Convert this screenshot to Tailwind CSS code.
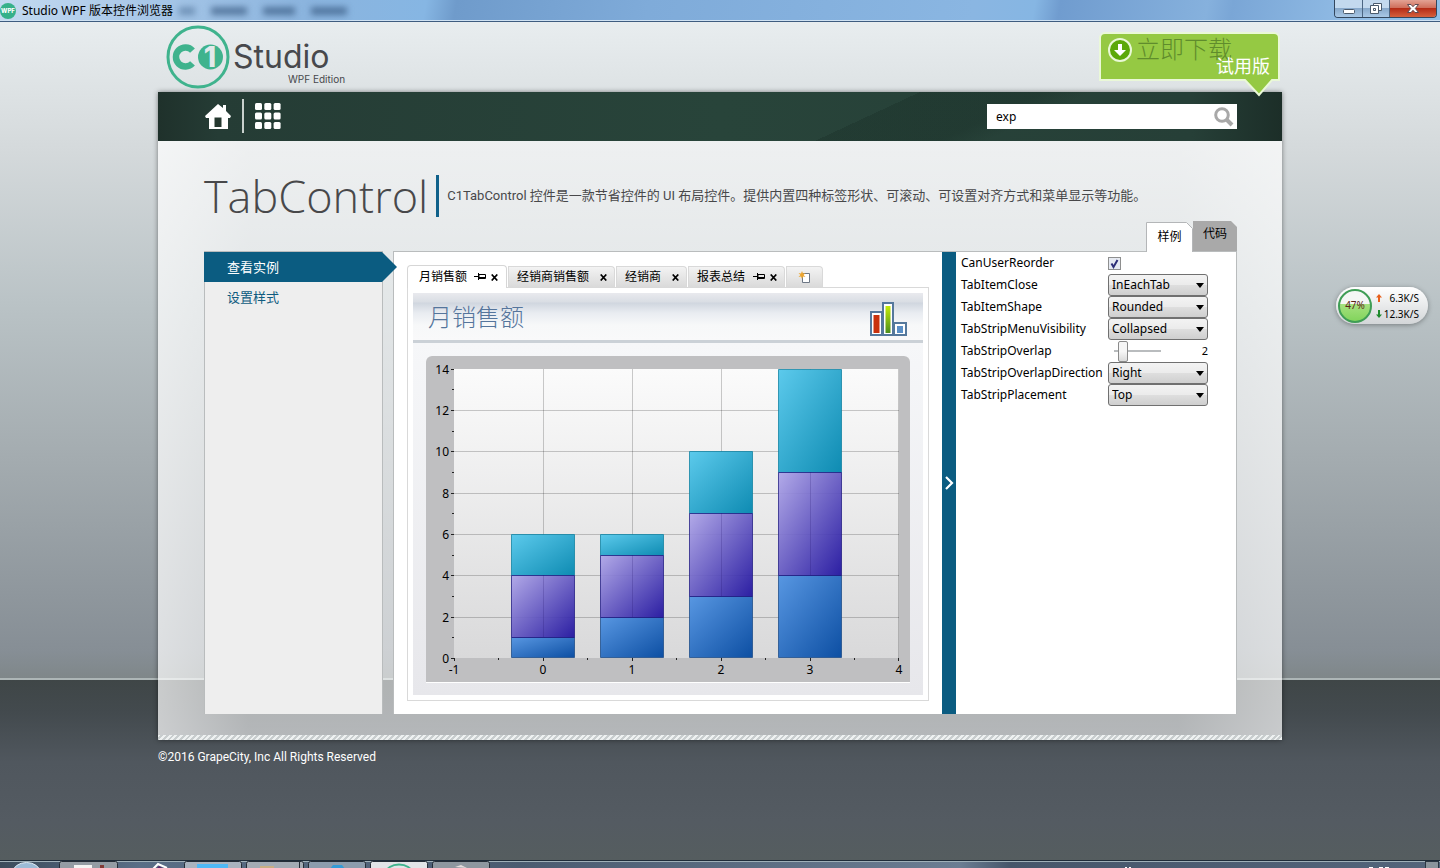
<!DOCTYPE html>
<html lang="zh-CN">
<head>
<meta charset="utf-8">
<meta name="viewport" content="width=device-width, initial-scale=1">
<title>Studio WPF 版本控件浏览器</title>
<script src="https://cdn.jsdelivr.net/npm/@tailwindcss/browser@4"></script>
</head>
<body class="flex min-h-screen flex-col bg-[#545b62] font-['Noto_Sans','Noto_Sans_CJK_SC',sans-serif] text-xs text-black">

<!-- Window title bar -->
<header class="relative flex h-[22px] shrink-0 items-center justify-between overflow-hidden border-b border-[#3f5d80] bg-[linear-gradient(100deg,#c3daf0_0,#a9c8e8_140px,#8bb4de_300px,#86b6e3_420px,#6f9bcb_450px,#7fabd9_640px,#8ab6e2_960px,#86b6e3_1020px,#709ccf_1045px,#86b1dd_1190px,#7aa6d6_1215px,#92bde6_1340px,#8fc0e8_100%)] shadow-[inset_0_-1px_0_#cfe2f3]">
  <div class="flex items-center gap-[6px]">
    <svg class="size-4" viewBox="0 0 16 16" aria-hidden="true"><circle cx="8" cy="8" r="8" fill="#35b18a"/><text x="8" y="10" font-size="6" font-weight="800" font-family="Inter" text-anchor="middle" fill="#fff">WPF</text></svg>
    <h1 class="text-xs leading-5">Studio WPF 版本控件浏览器</h1>
    <span class="flex items-center gap-4 blur-[3px]" aria-hidden="true">
      <i class="h-2 w-4 bg-[#3f638c]/50"></i><i class="h-2 w-9 bg-[#2c4d75]/60"></i><i class="h-2 w-8 bg-[#2c4d75]/60"></i><i class="h-2 w-9 bg-[#2c4d75]/60"></i>
    </span>
  </div>
  <div class="mr-[3px] flex h-[18px] self-start overflow-hidden rounded-b-[4px] border border-t-0 border-[#33475e]">
    <button aria-label="最小化" class="grid w-7 place-items-center border-r border-[#4c6683] bg-[linear-gradient(#c3d9ee_0_45%,#88a9cb_50%,#a9c8e6)]">
      <svg class="h-4 w-4" viewBox="0 0 16 16"><rect x="2.500" y="8.500" width="11" height="4" rx="1" fill="#fff" stroke="#4a5a6c"/></svg>
    </button>
    <button aria-label="还原" class="grid w-[27px] place-items-center border-r border-[#4c6683] bg-[linear-gradient(#c3d9ee_0_45%,#88a9cb_50%,#a9c8e6)]">
      <svg class="h-4 w-4" viewBox="0 0 16 16" fill="#fff" stroke="#4a5a6c"><path d="M5.500 2.500h8v7h-8z"/><path d="M2.500 4.500h8v8h-8zM5.500 7.500h2v2h-2z" fill-rule="evenodd"/></svg>
    </button>
    <button aria-label="关闭" class="grid w-[46px] place-items-center bg-[linear-gradient(#e3a294_0,#cf6f5c_45%,#b52c17_50%,#d5603c)]">
      <svg class="h-4 w-4" viewBox="0 0 16 16"><path d="M2.500 3.500h3.500l2 2.200 2-2.200h3.500L10.300 7.500l3.200 4H10L8 9.300l-2 2.200H2.500l3.200-4z" fill="#fff" stroke="#5d4a52"/></svg>
    </button>
  </div>
</header>

<main class="relative flex-1 bg-[linear-gradient(#e8edef_0,#d4d9db_130px,#bac3c6_280px,#a3abaf_440px,#868e95_630px,#7f8789_656px,#adb6b6_656px,#adb6b6_658px,#3f4647_658px,#434a4e_690px,#50575e_740px,#545b62_800px,#555d5f_838px)]">
  <div class="mx-auto w-full max-w-[1124px]">

    <!-- Brand row -->
    <div class="relative flex h-[70px] items-start justify-between pl-2">
      <a href="#" aria-label="C1 Studio WPF Edition" class="flex items-start gap-[3px] pt-[3px] font-['Inter',sans-serif] text-[#47484c]">
        <svg class="size-16" viewBox="0 0 64 64" aria-hidden="true">
          <circle cx="32" cy="32" r="30" fill="none" stroke="#3fb38d" stroke-width="3"/>
          <path d="M26.500 25.600a9.500 9.500 0 1 0 0 12.800" fill="none" stroke="#3fb38d" stroke-width="6.500"/>
          <circle cx="44.500" cy="32" r="12.500" fill="#3fb38d"/>
          <text x="44" y="42" text-anchor="middle" font-family="Inter" font-weight="800" font-size="28" fill="#e3e9ea">1</text>
        </svg>
        <span class="flex flex-col pt-4">
          <span class="text-[32px] leading-8">Studio</span>
          <span class="pl-[55px] text-[10px] leading-3">WPF Edition</span>
        </span>
      </a>
      <a href="#" class="relative z-10 mt-[10px] mr-[2px] block h-[66px] w-[181px]">
        <svg class="absolute inset-0" width="181" height="66" viewBox="0 0 181 66" aria-hidden="true">
          <path d="M6 1h169a5 5 0 0 1 5 5v42h-7L160 63 146 48H1V6a5 5 0 0 1 5-5z" fill="#95c943" stroke="#eaf8d8" stroke-width="2"/>
          <circle cx="21" cy="18" r="11" fill="#5ba808" stroke="#e9f8d6" stroke-width="2"/>
          <path d="M19 12h4v6h4l-6 6-6-6h4z" fill="#fff"/>
        </svg>
        <span class="absolute top-[3px] left-[37px] text-2xl leading-7 font-light text-[#5f8c2c]">立即下载</span>
        <span class="absolute top-[22px] right-[10px] text-lg leading-6 text-white">试用版</span>
      </a>
    </div>

    <div class="shadow-[0_0_5px_rgba(0,0,0,0.45)]">
      <!-- Navigation -->
      <nav class="flex h-[49px] items-center justify-between bg-[linear-gradient(155deg,transparent_0_62%,rgba(10,25,20,0.18)_62%_72%,transparent_76%),linear-gradient(90deg,#1f312b_0,#253c35_60px,#28443a_50%,#263f37_92%,#1c2e28)] pr-[45px] pl-[47px]">
        <div class="flex items-center gap-[11px] pb-px">
          <a href="#" aria-label="主页"><svg class="h-[26px] w-[26px]" viewBox="0 0 26 26" fill="#fff"><path d="M13 1l5 4V2h3v6l5 5-1 2h-2v11H4V15H1l-1-2z"/><path d="M9.500 14.500h7V24h-7z" fill="#25382f"/></svg></a>
          <span class="h-[34px] w-[2px] bg-[#c9d1ce]"></span>
          <a href="#" aria-label="全部控件"><svg class="h-[26px] w-[26px]" viewBox="0 0 26 26" fill="#fff"><g id="r"><rect width="7" height="7" rx="1.500"/><rect x="9.300" width="7" height="7" rx="1.500"/><rect x="18.600" width="7" height="7" rx="1.500"/></g><use href="#r" y="9.500"/><use href="#r" y="19"/></svg></a>
        </div>
        <form class="flex h-[25px] w-[250px] items-center bg-white pr-[3px]">
          <input type="text" aria-label="搜索" value="exp" class="min-w-0 flex-1 pl-[9px] text-xs outline-none">
          <button type="button" aria-label="搜索"><svg class="size-5" viewBox="0 0 20 20" fill="none" stroke="#a8a8a8"><circle cx="8" cy="8" r="6.300" stroke-width="3"/><path d="M12.500 12.500l5.500 5.500" stroke-width="4"/></svg></button>
        </form>
      </nav>

      <!-- Page panel -->
      <section class="bg-[linear-gradient(90deg,rgba(255,255,255,0.72)_0,rgba(255,255,255,0.59)_90px,rgba(255,255,255,0.59)_1020px,rgba(255,255,255,0.7)_100%)]">
        <div class="pr-[45px] pb-[21px] pl-[46px]">
          <div class="flex h-20 items-center pt-[30px]">
            <h2 class="border-r-3 border-[#10618a] pr-2 font-['Open_Sans',sans-serif] text-[45px] leading-[42px] font-light text-[#48484a]">TabControl</h2>
            <p class="pl-2 font-['Roboto','Noto_Sans_CJK_SC',sans-serif] text-[13px] leading-5 text-[#48484a]">C1TabControl 控件是一款节省控件的 UI 布局控件。提供内置四种标签形状、可滚动、可设置对齐方式和菜单显示等功能。</p>
          </div>
          <div class="relative -mb-px flex h-[31px] items-start justify-end" role="tablist">
            <button role="tab" aria-selected="true" class="relative z-10 mt-px h-[30px] w-[47px]"><svg class="absolute inset-0" width="47" height="30" viewBox="0 0 47 30"><path d="M.5 30V.5h40l6 6V30" fill="#fff" stroke="#b4b6b8"/></svg><span class="relative">样例</span></button>
            <button role="tab" aria-selected="false" class="relative h-[30px] w-[44px] pb-1"><svg class="absolute inset-0" width="44" height="30" viewBox="0 0 44 30"><path d="M0 0h38l6 6v24H0z" fill="#a9a9a9"/></svg><span class="relative">代码</span></button>
          </div>

          <div class="flex h-[463px] gap-[10px]">
            <!-- Sidebar -->
            <aside class="w-[179px] shrink-0 border border-b-0 border-[#b9bcbd] bg-[#eee]">
              <ul class="-ml-px text-[13px] leading-[30px]">
                <li><a href="#" class="relative block bg-[#0b5c81] pl-[23px] text-white">查看实例<svg class="absolute top-0 left-full" width="15" height="30" viewBox="0 0 15 30"><path d="M0 0l15 15L0 30z" fill="#0b5c81"/></svg></a></li>
                <li><a href="#" class="block pl-[23px] text-[#0f5b80]">设置样式</a></li>
              </ul>
            </aside>

            <div class="flex min-w-0 flex-1 border border-b-0 border-[#b9bcbd] bg-white">
              <!-- Demo tab control -->
              <div class="flex min-w-0 flex-1 flex-col p-[13px]">
                <div class="relative -mb-px flex items-end gap-px" role="tablist">
                  <div role="tab" aria-selected="true" class="z-10 flex h-[23px] items-center rounded-t-[4px] border border-b-0 border-[#d6d6d6] bg-white pr-2 pl-[11px]">
                    <span>月销售额</span>
                    <button aria-label="固定" class="ml-[7px]"><svg class="h-3 w-3" viewBox="0 0 12 12"><path d="M0 5.500h4M4.500 2v7M5 3.500h6.500v4H5z" fill="none" stroke="#000"/><path d="M5 6h6v2H5z"/></svg></button>
                    <button aria-label="关闭" class="ml-[5px]"><svg class="h-[7px] w-[7px]" viewBox="0 0 7 7"><path d="M.7.5l5.600 6M6.300.5l-5.600 6" stroke="#000" stroke-width="1.700"/></svg></button>
                  </div>
                  <div role="tab" class="mb-px flex h-[21px] items-center rounded-tr-[4px] border border-b-0 border-[#d9d9d9] bg-linear-to-b from-[#f3f3f3] to-[#dadada] pr-[7px] pl-2">
                    <span>经销商销售额</span>
                    <button aria-label="关闭" class="ml-[11px]"><svg class="h-[7px] w-[7px]" viewBox="0 0 7 7"><path d="M.7.5l5.600 6M6.300.5l-5.600 6" stroke="#000" stroke-width="1.700"/></svg></button>
                  </div>
                  <div role="tab" class="mb-px flex h-[21px] items-center rounded-tr-[4px] border border-b-0 border-[#d9d9d9] bg-linear-to-b from-[#f3f3f3] to-[#dadada] pr-[7px] pl-2">
                    <span>经销商</span>
                    <button aria-label="关闭" class="ml-[11px]"><svg class="h-[7px] w-[7px]" viewBox="0 0 7 7"><path d="M.7.5l5.600 6M6.300.5l-5.600 6" stroke="#000" stroke-width="1.700"/></svg></button>
                  </div>
                  <div role="tab" class="mb-px flex h-[21px] items-center rounded-tr-[4px] border border-b-0 border-[#d9d9d9] bg-linear-to-b from-[#f3f3f3] to-[#dadada] pr-[7px] pl-2">
                    <span>报表总结</span>
                    <button aria-label="固定" class="ml-2"><svg class="h-3 w-3" viewBox="0 0 12 12"><path d="M0 5.500h4M4.500 2v7M5 3.500h6.500v4H5z" fill="none" stroke="#000"/><path d="M5 6h6v2H5z"/></svg></button>
                    <button aria-label="关闭" class="ml-[5px]"><svg class="h-[7px] w-[7px]" viewBox="0 0 7 7"><path d="M.7.5l5.600 6M6.300.5l-5.600 6" stroke="#000" stroke-width="1.700"/></svg></button>
                  </div>
                  <button aria-label="新建标签" class="mb-px grid h-[21px] w-[37px] place-items-center rounded-tr-[4px] border border-b-0 border-[#d9d9d9] bg-linear-to-b from-[#f3f3f3] to-[#dadada]"><svg class="h-[13px] w-[13px]" viewBox="0 0 13 13"><path d="M4.500 2.500h7v9h-7z" fill="#fff" stroke="#6d7785"/><path d="M4 0l1 2.500L7.500 2 5.600 4 7.500 6 5 5.500 4 8 3 5.500.500 6l1.900-2L.500 2 3 2.500z" fill="#eca52f"/></svg></button>
                </div>
                <div class="flex flex-1 flex-col border border-[#d9d9d9] p-[5px]">
                  <div class="flex h-[50px] shrink-0 items-center justify-between border-b-3 border-[#cbd1d7] bg-[linear-gradient(#e9eaee_0,#d9dde4_9px,#d0d6df_10px,#e9ecf1_20px,#f7f8f9_32px,#f9f9fa)] pr-[15px] pl-[15px]">
                    <h3 class="text-2xl leading-8 font-light text-[#55759c]">月销售额</h3>
                    <svg class="mt-1 h-[36px] w-[39px]" viewBox="0 0 39 36" fill="#fff" stroke="#55789c" stroke-width="2"><path d="M2 11h11v23H2z"/><path d="M25 22h12v12H25z"/><path d="M14 2h10v32H14z"/><g stroke="none"><path d="M4.500 14h6v18h-6z" fill="#c8310d"/><path d="M16.500 5h5v27h-5z" fill="url(#green)"/><path d="M28 25h6v7h-6z" fill="#5b8fc6"/></g></svg>
                  </div>
                  <div class="flex-1 bg-linear-to-b from-[#f6f7f9] to-[#e7e7eb] px-[13px] pt-[13px]">
                    <svg class="block w-full" viewBox="0 0 484 327" role="img" aria-label="月销售额堆积柱形图" font-family="Noto Sans" font-size="12">
                      <defs>
                        <linearGradient id="green" x2="0" y2="1"><stop stop-color="#c6ec08"/><stop offset="1" stop-color="#4c8e1c"/></linearGradient>
                        <linearGradient id="plot" x2="0" y2="1"><stop stop-color="#fbfbfb"/><stop offset="1" stop-color="#d9d9da"/></linearGradient>
                        <linearGradient id="teal" x2="1" y2="1"><stop stop-color="#5ccaec"/><stop offset="1" stop-color="#0e8bb2"/></linearGradient>
                        <linearGradient id="violet" x2="1" y2="1"><stop stop-color="#aea5e8"/><stop offset="1" stop-color="#1e109e"/></linearGradient>
                        <linearGradient id="blue" x2="1" y2="1"><stop stop-color="#5897e2"/><stop offset="1" stop-color="#0d4fa3"/></linearGradient>
                      </defs>
                      <path d="M0 326V6a6 6 0 0 1 6-6h472a6 6 0 0 1 6 6v321H0z" fill="#fff"/>
                      <path d="M0 326V6a6 6 0 0 1 6-6h472a6 6 0 0 1 6 6v320z" fill="#bfbfc1"/>
                      <path d="M28 13h445v289H28z" fill="url(#plot)"/>
                      <path d="M117.500 13v289M206.500 13v289M295.500 13v289M384.500 13v289M472.500 13v289M28 54.500h445M28 95.500h445M28 137.500h445M28 178.500h445M28 219.500h445M28 261.500h445" stroke="#000" stroke-opacity=".2"/>
                      <g stroke-opacity=".75">
                        <g fill="url(#teal)" stroke="#0b7f9f"><path d="M85.500 178.500h63v41h-63z"/><path d="M174.500 178.500h63v21h-63z"/><path d="M263.500 95.500h63v62h-63z"/><path d="M352.500 13.500h63v103h-63z"/></g>
                        <g fill="url(#blue)" stroke="#1a4a86"><path d="M85.500 281.500h63v20h-63z"/><path d="M174.500 261.500h63v40h-63z"/><path d="M263.500 240.500h63v61h-63z"/><path d="M352.500 219.500h63v82h-63z"/></g>
                        <g fill="url(#violet)" fill-opacity=".93" stroke="#1d1880"><path d="M85.500 219.500h63v62h-63z"/><path d="M174.500 199.500h63v62h-63z"/><path d="M263.500 157.500h63v83h-63z"/><path d="M352.500 116.500h63v103h-63z"/></g>
                      </g>
                      <path d="M117.500 219v62M206.500 199v62M295.500 157v83M384.500 116v103" stroke="#20106a" stroke-opacity=".18"/>
                      <path d="M25 13.500h3M25 54.500h3M25 95.500h3M25 137.500h3M25 178.500h3M25 219.500h3M25 261.500h3M25 302.500h3M26 33.500h2M26 75.500h2M26 116.500h2M26 157.500h2M26 199.500h2M26 240.500h2M26 281.500h2M28.500 302v3M117.500 302v3M206.500 302v3M295.500 302v3M384.500 302v3M472.500 302v3M72.500 302v2M161.500 302v2M250.500 302v2M339.500 302v2M428.500 302v2" stroke="#222"/>
                      <g text-anchor="end"><text x="23" y="18">14</text><text x="23" y="59">12</text><text x="23" y="100">10</text><text x="23" y="142">8</text><text x="23" y="183">6</text><text x="23" y="224">4</text><text x="23" y="266">2</text><text x="23" y="307">0</text></g>
                      <g text-anchor="middle"><text x="28" y="318">-1</text><text x="117" y="318">0</text><text x="206" y="318">1</text><text x="295" y="318">2</text><text x="384" y="318">3</text><text x="473" y="318">4</text></g>
                    </svg>
                  </div>
                </div>
              </div>

              <!-- Collapsible property panel -->
              <button aria-label="折叠属性面板" class="grid w-[14px] shrink-0 place-items-center bg-[#0b5c81]"><svg width="10" height="14" viewBox="0 0 10 14"><path d="M2 1l6 6-6 6" fill="none" stroke="#fff" stroke-width="2.200"/></svg></button>
              <form class="grid w-[280px] shrink-0 auto-rows-[22px] grid-cols-[147px_100px] content-start items-center pl-[5px] text-xs">
                <label for="reorder">CanUserReorder</label>
                <span class="relative size-[13px]"><input id="reorder" type="checkbox" checked class="peer block size-[13px] appearance-none border border-[#8e8f8f] bg-[#e6eaf2]"><svg class="pointer-events-none absolute inset-0 hidden peer-checked:block" width="13" height="13" viewBox="0 0 13 13"><path d="M3.500 6.500l2 3.500 4-7" fill="none" stroke="#2d2f78" stroke-width="2"/></svg></span>
                <label for="close">TabItemClose</label>
                <span class="relative"><select id="close" class="block h-[22px] w-full appearance-none rounded-[3px] border border-[#707070] bg-[linear-gradient(#f3f3f3_0,#ebebeb_50%,#dedede_51%,#cfcfcf)] pl-[3px] text-xs"><option>InEachTab</option></select><svg class="pointer-events-none absolute top-[9px] right-1" width="8" height="5"><path d="M0 0h8L4 5z"/></svg></span>
                <label for="shape">TabItemShape</label>
                <span class="relative"><select id="shape" class="block h-[22px] w-full appearance-none rounded-[3px] border border-[#707070] bg-[linear-gradient(#f3f3f3_0,#ebebeb_50%,#dedede_51%,#cfcfcf)] pl-[3px] text-xs"><option>Rounded</option></select><svg class="pointer-events-none absolute top-[9px] right-1" width="8" height="5"><path d="M0 0h8L4 5z"/></svg></span>
                <label for="menu">TabStripMenuVisibility</label>
                <span class="relative"><select id="menu" class="block h-[22px] w-full appearance-none rounded-[3px] border border-[#707070] bg-[linear-gradient(#f3f3f3_0,#ebebeb_50%,#dedede_51%,#cfcfcf)] pl-[3px] text-xs"><option>Collapsed</option></select><svg class="pointer-events-none absolute top-[9px] right-1" width="8" height="5"><path d="M0 0h8L4 5z"/></svg></span>
                <label for="overlap">TabStripOverlap</label>
                <span class="flex items-center justify-between pl-[6px]">
                  <input id="overlap" type="range" min="0" max="20" value="2" class="h-[21px] w-[47px] appearance-none bg-[linear-gradient(transparent_9px,#b9bcbe_9px_11px,transparent_11px)] [&::-webkit-slider-thumb]:h-[21px] [&::-webkit-slider-thumb]:w-[10px] [&::-webkit-slider-thumb]:appearance-none [&::-webkit-slider-thumb]:rounded-[2px] [&::-webkit-slider-thumb]:border [&::-webkit-slider-thumb]:border-[#8b8b8b] [&::-webkit-slider-thumb]:bg-[linear-gradient(#f6f6f6_50%,#dadada)]">
                  <output for="overlap" class="text-[11px]">2</output>
                </span>
                <label for="direction">TabStripOverlapDirection</label>
                <span class="relative"><select id="direction" class="block h-[22px] w-full appearance-none rounded-[3px] border border-[#707070] bg-[linear-gradient(#f3f3f3_0,#ebebeb_50%,#dedede_51%,#cfcfcf)] pl-[3px] text-xs"><option>Right</option></select><svg class="pointer-events-none absolute top-[9px] right-1" width="8" height="5"><path d="M0 0h8L4 5z"/></svg></span>
                <label for="placement">TabStripPlacement</label>
                <span class="relative"><select id="placement" class="block h-[22px] w-full appearance-none rounded-[3px] border border-[#707070] bg-[linear-gradient(#f3f3f3_0,#ebebeb_50%,#dedede_51%,#cfcfcf)] pl-[3px] text-xs"><option>Top</option></select><svg class="pointer-events-none absolute top-[9px] right-1" width="8" height="5"><path d="M0 0h8L4 5z"/></svg></span>
              </form>
            </div>
          </div>
        </div>
        <div class="h-[5px] bg-[repeating-linear-gradient(135deg,#eef1f1_0_2px,#c8cdce_2px_4px)]"></div>
      </section>
    </div>

    <p class="pt-[7px] font-['Roboto',sans-serif] text-xs leading-5 text-white">©2016 GrapeCity, Inc All Rights Reserved</p>
  </div>

  <!-- Network speed widget floating over the desktop -->
  <div class="absolute top-[265px] right-3 flex h-[37px] w-[92px] items-center gap-1 rounded-full bg-linear-to-b from-white to-[#d3d6d8] pr-[9px] pl-[2px] text-[10px] shadow-[0_1px_5px_rgba(0,0,0,0.35)]">
    <div class="grid size-[34px] shrink-0 place-items-center rounded-full border-2 border-[#3f9d55] bg-[linear-gradient(#f4f6f4_0_45%,#a4e07e_45%,#82d45c)] text-[10px] text-[#5a2414]">47%</div>
    <div class="flex-1 leading-4">
      <div class="flex items-center justify-between"><svg width="6" height="8" viewBox="0 0 6 8"><path d="M3 0l3 3.500H4V8H2V3.500H0z" fill="#e8601c"/></svg>6.3K/S</div>
      <div class="flex items-center justify-between"><svg width="6" height="8" viewBox="0 0 6 8"><path d="M3 8l3-3.500H4V0H2v4.500H0z" fill="#1e8a2c"/></svg>12.3K/S</div>
    </div>
  </div>
</main>

<!-- Top edge of the taskbar -->
<footer class="flex h-2 shrink-0 justify-between overflow-hidden border-t border-[#1e2b38] bg-[linear-gradient(90deg,#3c4c5c,#5a6e86_140px,#4a5b70_520px,#6b7d92_960px,#46566a_1010px,#54657b)] shadow-[inset_0_1px_0_#9fb0b8]">
  <div class="flex items-start gap-1 pl-[13px]">
    <svg class="mr-[15px]" width="27" height="7" viewBox="0 0 27 7"><ellipse cx="13.500" cy="12" rx="14" ry="10.500" fill="#9dbbd6" stroke="#dfeaf3"/></svg>
    <svg width="59" height="7" viewBox="0 0 59 7"><rect x=".5" y=".5" width="58" height="12" rx="2" fill="#949ca4" stroke="#242d37"/><path d="M15 4h18v4H15z" fill="#f4f4f4"/><path d="M41 4h4v3h-4z" fill="#813b36"/></svg>
    <svg class="mr-1" width="54" height="7" viewBox="0 0 54 7"><path d="M31 8l5-5 9 4" fill="none" stroke="#fff" stroke-width="2"/><path d="M34 8l3-3 5 3z" fill="#5b2468"/></svg>
    <svg width="58" height="7" viewBox="0 0 58 7"><rect x=".5" y=".5" width="57" height="12" rx="2" fill="#a9b3bf" stroke="#242d37"/><path d="M13 3h31v5H13z" fill="#4fb8f5"/></svg>
    <svg width="58" height="7" viewBox="0 0 58 7"><rect x=".5" y=".5" width="57" height="12" rx="2" fill="#a3abb4" stroke="#242d37"/><path d="M53.500 0v7" stroke="#242d37"/><path d="M14 5h14v3H14z" fill="#c9ae83"/></svg>
    <svg width="58" height="7" viewBox="0 0 58 7"><rect x=".5" y=".5" width="57" height="12" rx="2" fill="#8c9cad" stroke="#242d37"/><path d="M22 8l3-4h9l3 4z" fill="#349bd6"/></svg>
    <svg width="58" height="7" viewBox="0 0 58 7"><rect x=".5" y=".5" width="57" height="12" rx="2" fill="#e1e4e7" stroke="#242d37"/><ellipse cx="29" cy="12" rx="13" ry="8.500" fill="none" stroke="#3fb38d" stroke-width="2"/></svg>
    <svg width="58" height="7" viewBox="0 0 58 7"><rect x=".5" y=".5" width="57" height="12" rx="2" fill="#8e979f" stroke="#242d37"/><path d="M23 6l6-2 6 3z" fill="#e5dede"/></svg>
  </div>
  <div class="flex items-start pr-[1px]">
    <svg width="300" height="7" viewBox="0 0 300 7" fill="#fff"><path d="M0 6h2v1H0zM4 6h2v1H4zM244 6h4v1h-4zM254 6h4v1h-4zM260 6h4v1h-4z"/></svg>
    <button aria-label="显示桌面" class="h-2 w-[14px] border border-[#2a3642] bg-[#8a949c]"></button>
  </div>
</footer>
</body>
</html>
